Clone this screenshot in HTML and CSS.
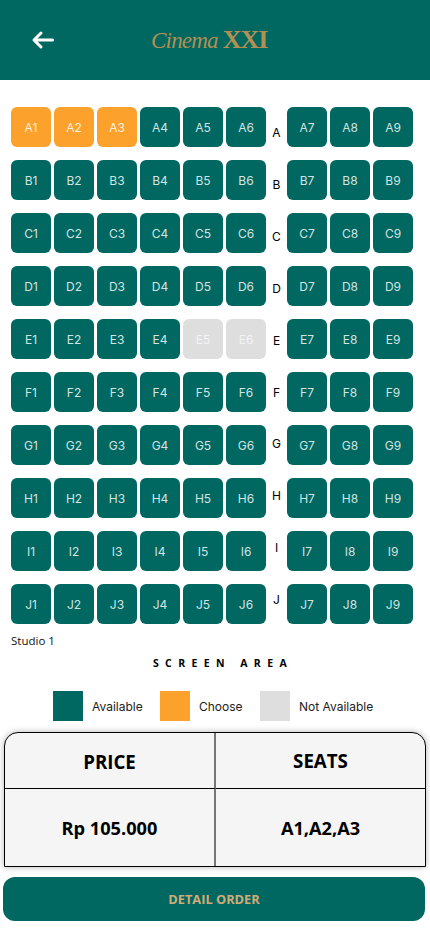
FILE: index.html
```html
<!DOCTYPE html>
<html lang="en">
<head>
<meta charset="utf-8">
<title>Cinema XXI seats</title>
<link rel="stylesheet" href="styles.css">
</head>
<body>
<header class="topbar">
  <svg class="back" width="24" height="20" viewBox="0 0 24 20" aria-hidden="true"><path d="M21.500 10H3M10 3L3 10l7 7" fill="none" stroke="#fff" stroke-width="3" stroke-linecap="round" stroke-linejoin="round"/></svg>
  <div class="logo"><span class="logo-script">Cinema</span><span class="logo-xxi">XXI</span></div>
</header>
<main class="map">
  <div class="block left">
    <div class="seat on">A1</div><div class="seat on">A2</div><div class="seat on">A3</div><div class="seat">A4</div><div class="seat">A5</div><div class="seat">A6</div>
    <div class="seat">B1</div><div class="seat">B2</div><div class="seat">B3</div><div class="seat">B4</div><div class="seat">B5</div><div class="seat">B6</div>
    <div class="seat">C1</div><div class="seat">C2</div><div class="seat">C3</div><div class="seat">C4</div><div class="seat">C5</div><div class="seat">C6</div>
    <div class="seat">D1</div><div class="seat">D2</div><div class="seat">D3</div><div class="seat">D4</div><div class="seat">D5</div><div class="seat">D6</div>
    <div class="seat">E1</div><div class="seat">E2</div><div class="seat">E3</div><div class="seat">E4</div><div class="seat off">E5</div><div class="seat off">E6</div>
    <div class="seat">F1</div><div class="seat">F2</div><div class="seat">F3</div><div class="seat">F4</div><div class="seat">F5</div><div class="seat">F6</div>
    <div class="seat">G1</div><div class="seat">G2</div><div class="seat">G3</div><div class="seat">G4</div><div class="seat">G5</div><div class="seat">G6</div>
    <div class="seat">H1</div><div class="seat">H2</div><div class="seat">H3</div><div class="seat">H4</div><div class="seat">H5</div><div class="seat">H6</div>
    <div class="seat">I1</div><div class="seat">I2</div><div class="seat">I3</div><div class="seat">I4</div><div class="seat">I5</div><div class="seat">I6</div>
    <div class="seat">J1</div><div class="seat">J2</div><div class="seat">J3</div><div class="seat">J4</div><div class="seat">J5</div><div class="seat">J6</div>
  </div>
  <div class="letters">
    <div>A</div><div>B</div><div>C</div><div>D</div><div>E</div><div>F</div><div>G</div><div>H</div><div>I</div><div>J</div>
  </div>
  <div class="block right">
    <div class="seat">A7</div><div class="seat">A8</div><div class="seat">A9</div>
    <div class="seat">B7</div><div class="seat">B8</div><div class="seat">B9</div>
    <div class="seat">C7</div><div class="seat">C8</div><div class="seat">C9</div>
    <div class="seat">D7</div><div class="seat">D8</div><div class="seat">D9</div>
    <div class="seat">E7</div><div class="seat">E8</div><div class="seat">E9</div>
    <div class="seat">F7</div><div class="seat">F8</div><div class="seat">F9</div>
    <div class="seat">G7</div><div class="seat">G8</div><div class="seat">G9</div>
    <div class="seat">H7</div><div class="seat">H8</div><div class="seat">H9</div>
    <div class="seat">I7</div><div class="seat">I8</div><div class="seat">I9</div>
    <div class="seat">J7</div><div class="seat">J8</div><div class="seat">J9</div>
  </div>
</main>
<p class="studio">Studio 1</p>
<p class="screen">SCREEN AREA</p>
<section class="legend">
  <div class="swatch avail"></div><span class="legend-text t1">Available</span>
  <div class="swatch choose"></div><span class="legend-text t2">Choose</span>
  <div class="swatch na"></div><span class="legend-text">Not Available</span>
</section>
<section class="summary">
  <div class="cell head price"><span class="head-price">PRICE</span></div>
  <div class="cell head seats">SEATS</div>
  <div class="cell val price">Rp 105.000</div>
  <div class="cell val seats">A1,A2,A3</div>
</section>
<button class="order" type="button">DETAIL ORDER</button>
</body>
</html>
```
FILE: styles.css
```css
* { box-sizing: border-box; }
html, body { margin: 0; padding: 0; }
body { width: 430px; height: 932px; background: #fff; overflow: hidden; font-family: "Open Sans", sans-serif; color: #000; }

.topbar { height: 80px; background: #006761; display: flex; align-items: center; padding: 0 0 1px 31px; }
.back { display: block; }
.logo { display: flex; align-items: baseline; margin-left: 96px; margin-top: 1px; color: #b38f52; font-family: "Liberation Serif", serif; }
.logo-script { font-style: italic; font-size: 23px; letter-spacing: -0.8px; margin-right: 5px; }
.logo-xxi { font-size: 26px; font-weight: 700; letter-spacing: -1px; }

.map { display: flex; padding: 27px 0 0 11px; }
.block { display: grid; grid-auto-rows: 40px; row-gap: 13px; column-gap: 3px; }
.left { grid-template-columns: repeat(6, 40px); }
.right { grid-template-columns: repeat(3, 40px); }
.seat { display: flex; align-items: center; justify-content: center; border-radius: 6px; background: #006761; color: #d3e4e2; font: 400 12px Inter, sans-serif; }
.seat.on { background: #fba12c; color: #fdf0de; }
.seat.off { background: #dedede; color: #f3f3f3; }
.letters { width: 21px; display: flex; flex-direction: column; font: 400 12px/51.9px Inter, sans-serif; text-align: center; }

.studio { margin: 7px 0 0 11px; font-size: 11.500px; line-height: 15px; color: #111; }
.screen { margin: 8px 0 0; padding-left: 16px; text-align: center; font-size: 10.500px; line-height: 14px; font-weight: 700; letter-spacing: 6.400px; }

.legend { display: flex; align-items: center; margin-top: 21px; padding-left: 53px; }
.swatch { width: 30px; height: 30px; flex: none; margin-right: 9px; }
.avail { background: #006761; }
.choose { background: #fba12c; }
.na { background: #dedede; }
.legend-text { font: 400 12px Inter, sans-serif; color: #222; }
.t1 { width: 68px; }
.t2 { width: 61px; }

.summary { margin: 11px 4px 0; width: 422px; height: 135px; display: grid; grid-template-columns: 211px 209px; grid-template-rows: 56px 77px; background: #f5f5f5; border: 1px solid #000; border-radius: 14px 14px 0 0; box-shadow: 0 0 6px rgba(0,0,0,.3); }
.cell { display: flex; align-items: center; justify-content: center; font-weight: 700; font-size: 18.200px; }
.head { border-bottom: 1px solid #000; font-size: 18.700px; }
.head-price { margin-top: 2px; }
.price { border-right: 2px solid #777; }

.order { display: block; margin: 10px 0 0 3px; width: 422px; height: 44px; border: 0; border-radius: 12px; background: #006761; color: #d0ac78; font: 700 12.800px "Open Sans", sans-serif; }
```
